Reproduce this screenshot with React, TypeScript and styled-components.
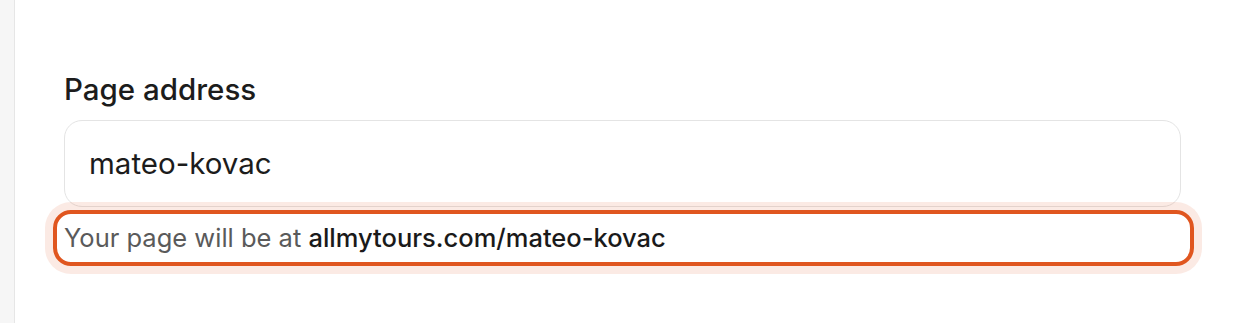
import React, {useState} from 'react';
import styled, {createGlobalStyle} from 'styled-components';

const Global = createGlobalStyle`
  html, body {
    margin: 0;
    padding: 0;
    background: #ffffff;
    font-family: 'Inter', 'Noto Sans', sans-serif;
  }
`;

const Page = styled.div`
  display: flex;
  min-height: 323px;
`;

const Rail = styled.aside`
  width: 14px;
  flex: 0 0 14px;
  background: #f6f6f6;
  border-right: 1.5px solid #e6e6e6;
`;

const Main = styled.main`
  flex: 1;
  padding: 71px 63px 0 49px;
`;

const Field = styled.div`
  display: flex;
  flex-direction: column;
`;

const Label = styled.label`
  font-size: 29.5px;
  font-weight: 500;
  color: #1c1c1c;
  line-height: 36px;
  margin-bottom: 13px;
`;

const Input = styled.input`
  box-sizing: border-box;
  height: 87px;
  width: 100%;
  border: 1.5px solid #e4e4e4;
  border-radius: 18px;
  padding: 0 24px 2px;
  font-family: inherit;
  font-size: 29.5px;
  color: #1c1c1c;
  background: #fff;
  outline: none;
`;

const Hint = styled.p`
  margin: 3px -13px 0 -11px;
  padding: 7px 7px;
  border: 4.5px solid #e0561f;
  border-radius: 18px;
  box-shadow: 0 0 0 8px rgba(224, 86, 31, 0.12);
  font-size: 25.5px;
  line-height: 34px;
  color: #5a5a5a;
`;

const Url = styled.strong`
  font-weight: 500;
  color: #1a1a1a;
`;

export default () => {
  const [slug, setSlug] = useState('mateo-kovac');
  const onSlug = (e: React.ChangeEvent<HTMLInputElement>) => {
    setSlug(e.currentTarget.value);
  };
  return (
    <>
      <Global />
      <Page>
        <Rail />
        <Main>
          <Field>
            <Label htmlFor="slug">Page address</Label>
            <Input id="slug" value={slug} onChange={onSlug} />
            <Hint>
              Your page will be at <Url>allmytours.com/{slug}</Url>
            </Hint>
          </Field>
        </Main>
      </Page>
    </>
  );
};
